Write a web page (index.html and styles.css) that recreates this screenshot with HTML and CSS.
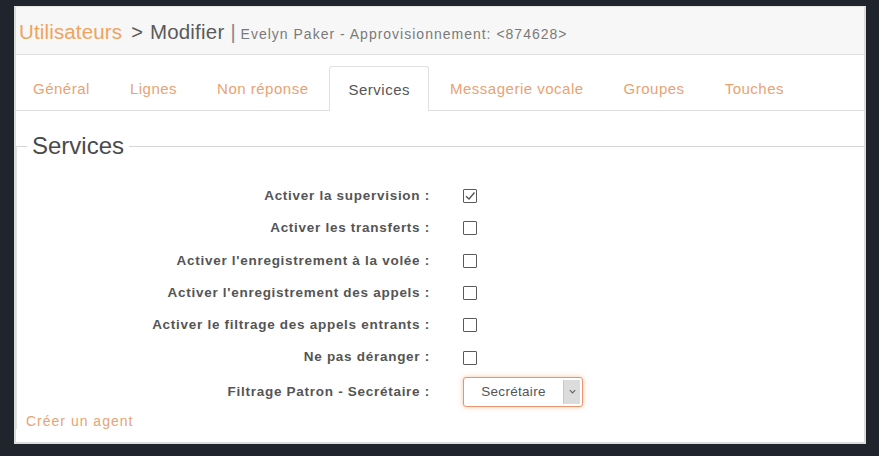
FILE: index.html
```html
<!DOCTYPE html>
<html lang="fr">
<head>
<meta charset="utf-8">
<title>Utilisateurs - Modifier</title>
<link rel="stylesheet" href="styles.css">
</head>
<body>
<div class="panel">
  <div class="header">
    <span class="crumb-link">Utilisateurs</span>
    <span class="crumb-sep">&gt;</span>
    <span class="crumb-current">Modifier</span>
    <span class="crumb-bar">|</span>
    <span class="crumb-sub">Evelyn Paker - Approvisionnement: &lt;874628&gt;</span>
  </div>
  <ul class="tabs">
    <li class="tab">Général</li>
    <li class="tab">Lignes</li>
    <li class="tab">Non réponse</li>
    <li class="tab active">Services</li>
    <li class="tab">Messagerie vocale</li>
    <li class="tab">Groupes</li>
    <li class="tab">Touches</li>
  </ul>
  <fieldset class="services">
    <legend>Services</legend>
    <div class="form">
      <div class="row"><span class="label">Activer la supervision :</span>
        <span class="cb checked"><svg viewBox="0 0 14 14" width="14" height="14"><path d="M3 7.2 L6 10 L11.5 3.5" fill="none" stroke="#555" stroke-width="1.4"/></svg></span></div>
      <div class="row"><span class="label">Activer les transferts :</span><span class="cb"></span></div>
      <div class="row"><span class="label">Activer l'enregistrement à la volée :</span><span class="cb"></span></div>
      <div class="row"><span class="label">Activer l'enregistrement des appels :</span><span class="cb"></span></div>
      <div class="row"><span class="label">Activer le filtrage des appels entrants :</span><span class="cb"></span></div>
      <div class="row"><span class="label">Ne pas déranger :</span><span class="cb"></span></div>
      <div class="row row-select"><span class="label">Filtrage Patron - Secrétaire :</span>
        <div class="select"><span class="select-value">Secrétaire</span><span class="select-arrow"><svg viewBox="0 0 10 10" width="9" height="9"><path d="M2 3.5 L5 6.5 L8 3.5" fill="none" stroke="#666" stroke-width="1.3"/></svg></span></div>
      </div>
    </div>
    <div class="agent-link">Créer un agent</div>
  </fieldset>
</div>
</body>
</html>
```
FILE: styles.css
```css
html, body {
  margin: 0;
  padding: 0;
}
body {
  background: #20252d;
  font-family: "Liberation Sans", Arial, sans-serif;
  padding: 6px 13px 12px 14px;
  box-sizing: border-box;
  height: 456px;
}
.panel {
  width: 852px;
  height: 438px;
  box-sizing: border-box;
  background: #fff;
  border: 2px solid #dcdcdc;
  border-top: 1px solid #e6e6e6;
}
.header {
  height: 48px;
  background: #f7f7f7;
  border-bottom: 1px solid #e2e2e2;
  display: flex;
  align-items: baseline;
  padding: 13px 0 0 3px;
  box-sizing: border-box;
  white-space: nowrap;
}
.crumb-link {
  color: #eea35e;
  font-size: 20.5px;
  letter-spacing: 0.15px;
}
.crumb-sep {
  color: #5a5a5a;
  font-size: 20px;
  margin-left: 9px;
}
.crumb-current {
  color: #5a5a5a;
  font-size: 20.5px;
  margin-left: 7px;
  letter-spacing: 0.2px;
}
.crumb-bar {
  color: #888;
  font-size: 20px;
  margin-left: 6px;
}
.crumb-sub {
  color: #7a7a7a;
  font-size: 14px;
  margin-left: 5px;
  letter-spacing: 1px;
}
.tabs {
  list-style: none;
  margin: 0 0 0 -2px;
  padding: 11px 0 0 0;
  display: flex;
  border-bottom: 1px solid #dedede;
  height: 56px;
  box-sizing: border-box;
}
.tab {
  height: 44px;
  box-sizing: border-box;
  padding: 0 18px;
  margin-right: 2px;
  display: flex;
  align-items: center;
  color: #e8a374;
  font-size: 15px;
  letter-spacing: 0.5px;
  border: 1px solid transparent;
  border-bottom: none;
  white-space: nowrap;
}
.tab.active {
  color: #555;
  background: #fff;
  border-color: #e0e0e0;
  height: 45px;
  margin-bottom: -1px;
  border-radius: 3px 3px 0 0;
}
.services {
  margin: 21px 0 0 0;
  padding: 0;
  border: none;
  border-top: 1px solid #d6d6d6;
  border-left: 1px solid #e2e2e2;
  min-width: 0;
}
.services legend {
  margin-left: 10px;
  padding: 0 5px;
  font-size: 24px;
  color: #4a4a4a;
  line-height: 28px;
}
.form {
  margin-top: 20px;
  display: grid;
  grid-template-columns: 413px auto;
  column-gap: 33px;
  justify-items: start;
}
.row {
  display: contents;
}
.label {
  justify-self: end;
  align-self: center;
  font-size: 13.5px;
  font-weight: bold;
  color: #555;
  letter-spacing: 0.72px;
  white-space: nowrap;
  line-height: 32.3px;
}
.cb {
  align-self: center;
  width: 14px;
  height: 14px;
  box-sizing: border-box;
  border: 1px solid #5a5a5a;
  border-radius: 1px;
  background: #fff;
  display: block;
  position: relative;
}
.cb svg {
  position: absolute;
  left: -1px;
  top: -1px;
}
.row-select .label {
  line-height: 36px;
}
.select {
  align-self: center;
  width: 120px;
  height: 30px;
  box-sizing: border-box;
  border: 1px solid #e89572;
  border-radius: 3px;
  box-shadow: 0 0 5px rgba(240, 150, 90, 0.55);
  display: flex;
  background: #fff;
}
.select-value {
  flex: 1;
  text-align: center;
  line-height: 28px;
  font-size: 13.5px;
  letter-spacing: 0.3px;
  color: #555;
}
.select-arrow {
  width: 16px;
  margin: 2px 2px 2px 0;
  background: #dcdcdc;
  border-left: 1px solid #c8c8c8;
  display: flex;
  align-items: center;
  justify-content: center;
}
.agent-link {
  margin: 3px 0 0 9px;
  color: #e8a374;
  font-size: 14px;
  letter-spacing: 1px;
  line-height: 16px;
}
```
